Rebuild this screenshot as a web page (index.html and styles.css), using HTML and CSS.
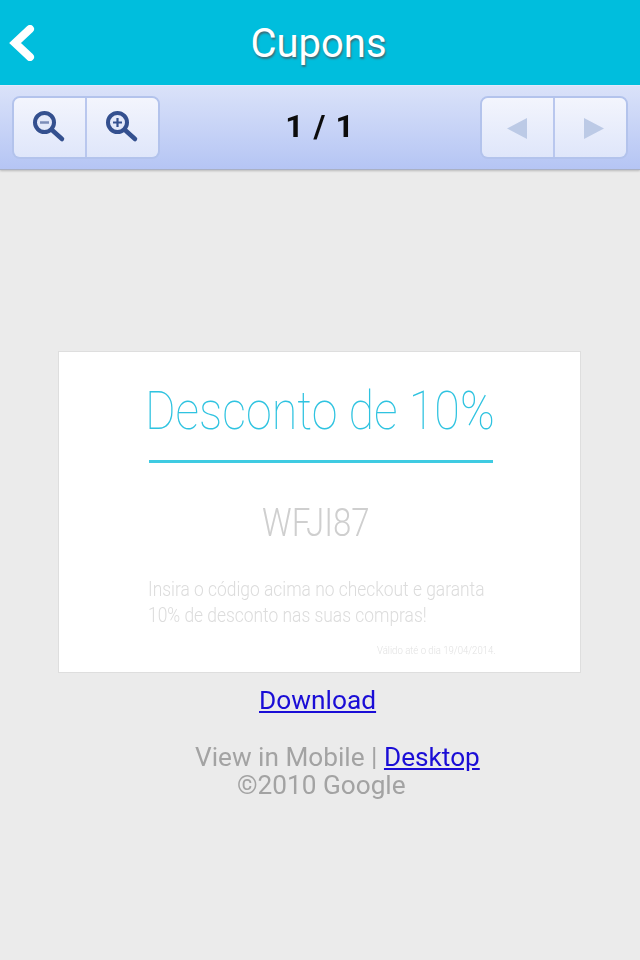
FILE: index.html
```html
<!DOCTYPE html>
<html lang="en">
<head>
    <title>Cupons</title>
    <meta name="viewport" content="width=device-width, initial-scale=1">
    <link rel="stylesheet" href="styles.css">
</head>
<body>
    <header class="topbar">
        <a class="back" href="#">
            <svg width="28" height="36" viewBox="0 0 28 36"><path d="M22 4 L7 18 L22 32" fill="none" stroke="#fff" stroke-width="8" stroke-linecap="round" stroke-linejoin="miter"/></svg>
        </a>
        <h1 class="title">Cupons</h1>
    </header>
    <div class="toolbar">
        <div class="btn-group">
            <button class="btn">
                <svg width="36" height="36" viewBox="0 0 36 36">
                    <circle cx="12.5" cy="12.5" r="9.5" fill="#e4e9fa" stroke="#34508f" stroke-width="4"/>
                    <path d="M20 20 L30 29" stroke="#34508f" stroke-width="4.5" stroke-linecap="round"/>
                    <path d="M8 12.5 H17" stroke="#7c8db8" stroke-width="2.5"/>
                </svg>
            </button>
            <button class="btn">
                <svg width="36" height="36" viewBox="0 0 36 36">
                    <circle cx="12.5" cy="12.5" r="9.5" fill="#e4e9fa" stroke="#34508f" stroke-width="4"/>
                    <path d="M20 20 L30 29" stroke="#34508f" stroke-width="4.5" stroke-linecap="round"/>
                    <path d="M8 12.5 H17 M12.5 8 V17" stroke="#34508f" stroke-width="2.2"/>
                </svg>
            </button>
        </div>
        <div class="pages">1 / 1</div>
        <div class="btn-group">
            <button class="btn btn-off">
                <svg class="arrow-prev" width="22" height="24" viewBox="0 0 22 24"><path d="M21 2 V23 L1 12.5 Z" fill="#bccae6"/></svg>
            </button>
            <button class="btn btn-off">
                <svg class="arrow-next" width="22" height="24" viewBox="0 0 22 24"><path d="M1 2 V23 L21 12.5 Z" fill="#bccae6"/></svg>
            </button>
        </div>
    </div>
    <main class="content">
        <div class="coupon">
            <div class="coupon-title"><span class="squeeze">Desconto de 10%</span></div>
            <div class="coupon-line"></div>
            <div class="coupon-code"><span class="squeeze">WFJI87</span></div>
            <p class="coupon-text"><span class="squeeze">Insira o código acima no checkout e garanta<br>10% de desconto nas suas compras!</span></p>
            <div class="coupon-date"><span class="squeeze">Válido até o dia 19/04/2014.</span></div>
        </div>
        <a class="download" href="#">Download</a>
        <div class="footer">
            <div class="footer-views">View in Mobile | <a href="#">Desktop</a></div>
            <div class="footer-copy">©2010 Google</div>
        </div>
    </main>
</body>
</html>
```
FILE: styles.css
```css
html, body {
    margin: 0;
    padding: 0;
}
body {
    height: 960px;
    overflow: hidden;
    background: #ebebeb;
    font-family: Roboto, "Liberation Sans", sans-serif;
    filter: blur(0.4px);
}
a {
    color: #1a0dd6;
}
.topbar {
    height: 85px;
    background: #00bedd;
    display: flex;
    align-items: center;
    justify-content: center;
    position: relative;
}
.back {
    position: absolute;
    left: 8px;
    top: 25px;
    line-height: 0;
}
.title {
    margin: 2px 3px 0 0;
    font-size: 40px;
    font-weight: 400;
    color: #fff;
    text-shadow: 1px 2px 2px #3d6d78;
}
.toolbar {
    height: 85px;
    box-sizing: border-box;
    padding: 10px 12px 0;
    display: flex;
    justify-content: space-between;
    background: linear-gradient(#dae2f9, #b5c5f4);
    border-top: 1px solid #e3e9fb;
    border-bottom: 1px solid #a9b0c4;
    box-shadow: 0 1px 2px #b9b9b9;
}
.btn-group {
    display: flex;
    height: 63px;
    width: 148px;
    box-sizing: border-box;
    border: 2px solid #b3c3ec;
    border-radius: 8px;
    overflow: hidden;
}
.btn {
    flex: 1;
    padding: 0;
    border: 0;
    background: linear-gradient(#f3f5fd, #dfe6fa);
    display: flex;
    align-items: center;
    justify-content: center;
}
.btn + .btn {
    border-left: 2px solid #b9c7ee;
}
.arrow-prev {
    margin-right: 2px;
}
.arrow-next {
    margin-left: 6px;
}
.pages {
    font-size: 32px;
    font-weight: 700;
    color: #0c0c0c;
    letter-spacing: 1px;
    line-height: 61px;
}
.content {
    display: flex;
    flex-direction: column;
    align-items: flex-start;
}
.coupon {
    box-sizing: border-box;
    width: 523px;
    height: 322px;
    margin: 181px 0 0 58px;
    padding: 26px 87px 0 88px;
    background: #fff;
    border: 1px solid #dedede;
    color: #cfcfcf;
    font-weight: 300;
}
.squeeze {
    display: inline-block;
    transform: scaleX(0.87);
    transform-origin: left;
    filter: blur(0.4px);
}
.coupon-title {
    margin-left: -2px;
    font-size: 54px;
    line-height: 66px;
    font-weight: 100;
    color: #2fc3e0;
    white-space: nowrap;
}
.coupon-title .squeeze {
    transform: scaleX(0.865);
}
.coupon-line {
    height: 3px;
    margin: 16px 0 0 2px;
    background: #3fcbe2;
}
.coupon-code {
    margin: 38px 0 0 115px;
    font-size: 38px;
    line-height: 44px;
    white-space: nowrap;
}
.coupon-text {
    margin: 31px 0 0 1px;
    font-size: 20px;
    line-height: 26px;
    color: #dcdcdc;
    white-space: nowrap;
}
.coupon-date {
    margin: 16px 0 0 230px;
    font-size: 11px;
    color: #e2e2e2;
    white-space: nowrap;
}
.download {
    margin: 11px 0 0 259px;
    font-size: 26.3px;
    line-height: 32px;
}
.footer {
    margin: 27px 0 0 195px;
    font-size: 26.2px;
    line-height: 28px;
    color: #a3a3a3;
}
.footer-copy {
    margin-left: 42px;
}
```
